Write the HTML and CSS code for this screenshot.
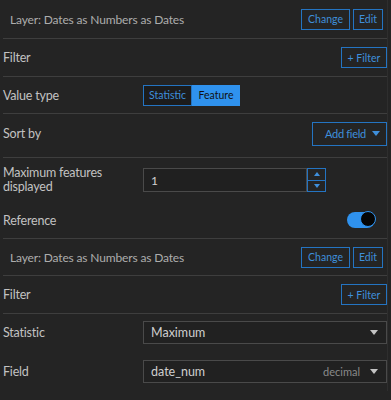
FILE: index.html
```html
<!DOCTYPE html>
<html>
<head>
<meta charset="utf-8">
<link rel="stylesheet" href="styles.css">
</head>
<body>
<div class="panel">
  <div class="row layer-row r1">
    <span class="layer-title">Layer: Dates as Numbers as Dates</span>
    <div class="btns"><button class="btn btn-change">Change</button><button class="btn btn-edit">Edit</button></div>
  </div>
  <div class="row r2 sep">
    <span class="label">Filter</span>
    <button class="btn btn-filter">+ Filter</button>
  </div>
  <div class="row grid r3 sep">
    <span class="label">Value type</span>
    <div class="seg"><button class="seg-item">Statistic</button><button class="seg-item active">Feature</button></div>
  </div>
  <div class="row r4 sep">
    <span class="label">Sort by</span>
    <button class="btn btn-add"><span class="add-text">Add field</span><svg class="caret" width="8" height="5" viewBox="0 0 8 5"><path d="M0 0h8L4 5z" fill="currentColor"/></svg></button>
  </div>
  <div class="row grid r5 sep">
    <span class="label label-2l">Maximum features<br>displayed</span>
    <div class="number">
      <div class="number-input">1</div>
      <div class="spin">
        <div class="spin-btn"><svg width="6" height="4" viewBox="0 0 6 4"><path d="M0 4h6L3 0z" fill="currentColor"/></svg></div>
        <div class="spin-btn"><svg width="6" height="4" viewBox="0 0 6 4"><path d="M0 0h6L3 4z" fill="currentColor"/></svg></div>
      </div>
    </div>
  </div>
  <div class="row r6">
    <span class="label">Reference</span>
    <div class="toggle"><span class="knob"></span></div>
  </div>
  <div class="row layer-row r7 sep">
    <span class="layer-title">Layer: Dates as Numbers as Dates</span>
    <div class="btns"><button class="btn btn-change">Change</button><button class="btn btn-edit">Edit</button></div>
  </div>
  <div class="row r8 sep">
    <span class="label">Filter</span>
    <button class="btn btn-filter">+ Filter</button>
  </div>
  <div class="row grid r9">
    <span class="label">Statistic</span>
    <div class="select"><span class="sel-text">Maximum</span><svg class="sel-caret" width="8" height="5" viewBox="0 0 8 5"><path d="M0 0h8L4 5z" fill="currentColor"/></svg></div>
  </div>
  <div class="row grid r10">
    <span class="label">Field</span>
    <div class="select"><span class="sel-text">date_num</span><span class="sel-hint">decimal</span><svg class="sel-caret" width="8" height="5" viewBox="0 0 8 5"><path d="M0 0h8L4 5z" fill="currentColor"/></svg></div>
  </div>
</div>
</body>
</html>
```
FILE: styles.css
```css
html, body {
  margin: 0;
  padding: 0;
  background: #242424;
}
body {
  font-family: Lato, "Noto Sans", sans-serif;
  color: #c4c4c4;
  font-size: 12px;
}
.panel {
  margin-left: 3px;
  width: 385px;
  border-right: 1px solid #2e2e2e;
  box-sizing: border-box;
}
.row {
  display: flex;
  align-items: center;
  justify-content: space-between;
  box-sizing: border-box;
}
.row.grid {
  display: grid;
  grid-template-columns: 140px 1fr;
  align-items: center;
}
.sep { border-top: 1px solid #3e3e3e; }
.r1 { height: 38px; }
.r2 { height: 38px; }
.r3 { height: 37px; }
.r4 { height: 44px; padding-bottom: 4px; }
.r5 { height: 45px; }
.r6 { height: 36px; }
.r7 { height: 37px; }
.r8 { height: 38px; }
.r9 { height: 38px; border-top: 1px solid #3e3e3e; }
.r10 { height: 40px; }
.layer-row { padding: 0 4px 0 7px; }
.layer-title { color: #adadad; font-size: 12px; letter-spacing: -0.15px; }
.label { color: #c2c2c2; font-size: 12.5px; letter-spacing: -0.2px; }
.label-2l { line-height: 14px; }
.btns { display: flex; gap: 3px; }
.btn {
  font-family: inherit;
  background: transparent;
  border: 1px solid #2474c2;
  color: #3f8fdb;
  font-size: 10.5px;
  height: 21px;
  padding: 0;
  box-sizing: border-box;
  display: flex;
  align-items: center;
  justify-content: center;
  white-space: nowrap;
}
.btn-change { width: 49px; }
.btn-edit { width: 30px; }
.btn-filter { width: 46px; }
.btn-add {
  width: 75px;
  height: 24px;
  font-size: 11px;
  letter-spacing: -0.3px;
  justify-content: flex-start;
  gap: 6px;
  padding: 0 7px 0 12px;
}
.add-text { flex: none; }
.caret { color: #3f8fdb; flex: none; }
.seg { display: flex; }
.seg-item {
  font-family: inherit;
  font-size: 10.5px;
  height: 21px;
  width: 49px;
  padding: 0;
  background: #1c1c1c;
  border: 1px solid #2474c2;
  color: #3f8fdb;
}
.seg-item.active {
  width: 48px;
  background: #2f92ee;
  border-color: #2f92ee;
  color: #111;
}
.number { display: flex; height: 24px; width: 183px; }
.number-input {
  width: 164px;
  box-sizing: border-box;
  border: 1px solid #4a4a4a;
  background: #202020;
  color: #d0d0d0;
  padding-left: 7px;
  display: flex;
  align-items: center;
}
.spin { width: 19px; display: flex; flex-direction: column; }
.spin-btn {
  flex: 1;
  border: 1px solid #2474c2;
  color: #3f8fdb;
  display: flex;
  align-items: center;
  justify-content: center;
  box-sizing: border-box;
}
.spin-btn + .spin-btn { border-top: none; }
.toggle {
  width: 28px;
  height: 16px;
  border-radius: 8px;
  background: #2f92ee;
  position: relative;
  margin-right: 12px;
}
.knob {
  position: absolute;
  right: -1px;
  top: -1px;
  width: 16px;
  height: 16px;
  border-radius: 50%;
  background: #050505;
  border: 1px solid #2f92ee;
  box-sizing: border-box;
}
.select {
  height: 23px;
  box-sizing: border-box;
  border: 1px solid #4a4a4a;
  background: #212121;
  display: flex;
  align-items: center;
  padding: 0 8px 0 7px;
}
.sel-text { color: #cfcfcf; flex: 1; font-size: 12.5px; }
.sel-hint { color: #8a8a8a; font-size: 11px; margin-right: 10px; }
.sel-caret { color: #c4c4c4; }
```
